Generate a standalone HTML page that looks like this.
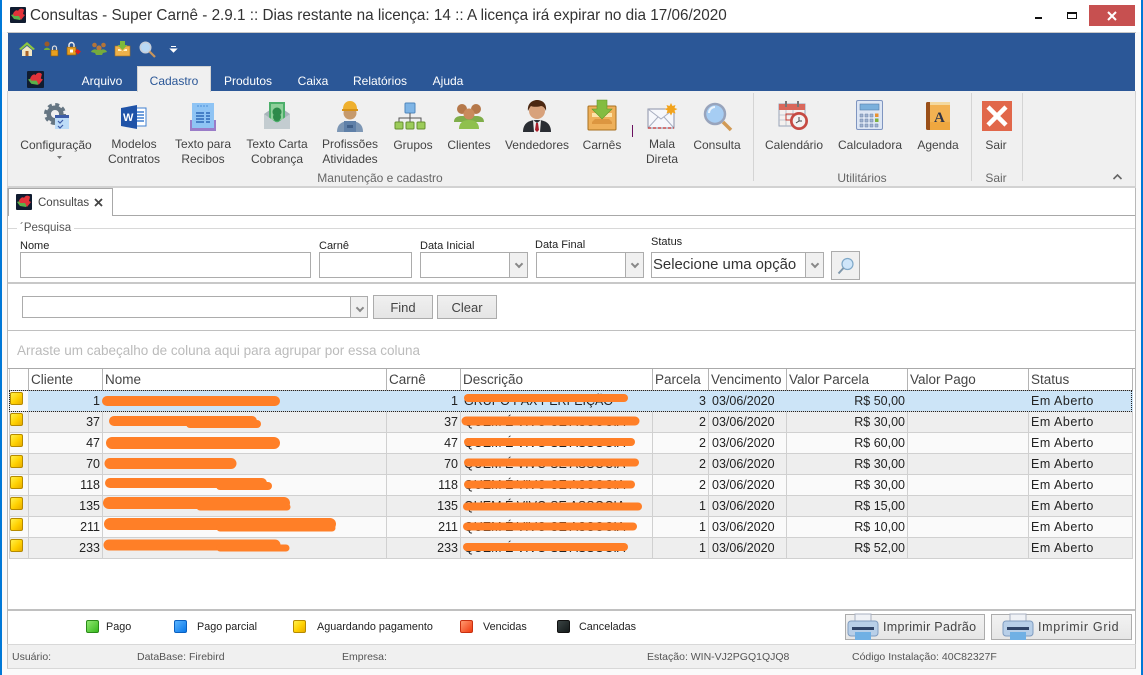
<!DOCTYPE html>
<html lang="pt"><head><meta charset="utf-8"><title>Consultas - Super Carnê</title>
<style>
html,body{margin:0;padding:0;width:1143px;height:675px;overflow:hidden;background:#fafafa}
body{position:relative;font-family:"Liberation Sans",sans-serif;font-size:12px;color:#444}
.a{position:absolute;box-sizing:border-box}
.t{position:absolute;white-space:nowrap;line-height:16px}
.c{transform:translateX(-50%)}
svg{position:absolute;overflow:visible}
.inp{position:absolute;box-sizing:border-box;background:#fff;border:1px solid #acacac}
.dd{position:absolute;box-sizing:border-box;top:0;right:0;bottom:0;width:18px;background:#f0f0f0;border-left:1px solid #acacac}
.dd:after{content:"";position:absolute;left:6px;top:8px;width:4px;height:4px;border-right:2px solid #888;border-bottom:2px solid #888;transform:rotate(45deg)}
.btn{position:absolute;box-sizing:border-box;border:1px solid #acacac;background:linear-gradient(#f0f0f0,#e5e5e5);text-align:center;color:#444}
table{position:absolute;left:9px;top:369px;border-collapse:separate;border-spacing:0;table-layout:fixed;width:1124px;font-size:12.5px;color:#222}
td,th{box-sizing:border-box;border-right:1px solid #d0d0d0;border-bottom:1px solid #d0d0d0;padding:0 2px 0 3px;height:21px;font-weight:normal;text-align:left;white-space:nowrap;overflow:hidden;line-height:20px}
th{height:22px;background:#fff;color:#444;font-size:13.5px;padding-left:2px;border-right-color:#b4b4b4;border-bottom-color:#b4b4b4;border-top:0}
td:first-child,th:first-child{border-left:1px solid #d0d0d0}
td:last-child{letter-spacing:.5px;padding-left:2px}
.r{text-align:right;padding-right:2px}
tr.o td{background:#fafafa}tr.e td{background:#eee}
tr.s td{background:#cce4f7;border-right-color:#cce4f7}
td.i{background:#fafafa!important}
.sq{position:absolute;box-sizing:border-box;width:13px;height:13px;border-radius:2px}
.y{background:linear-gradient(135deg,#fff04a,#ffd000 55%,#e8ac00);border:1px solid #b58a00}
.lg{font-size:10.800px;color:#222}
</style></head><body>
<svg width="0" height="0" style="position:absolute"><defs>
<symbol id="logo" viewBox="0 0 16 16"><rect width="16" height="16" rx="1" fill="#101c30"/><path d="M1 8l6-2 6 3-3 4-6-1z" fill="#5cb04a"/><path d="M3 7c1-3 4-5 5-3 1-3 5-3 6-1l-1 4 2 1-4 5-2-4-5 0z" fill="#e2333a"/></symbol>
</defs></svg>

<!-- window frame -->
<div class="a" style="left:0;top:0;width:2px;height:675px;background:#0078d7"></div>
<div class="a" style="left:1141px;top:0;width:2px;height:675px;background:#0078d7"></div>
<div class="a" style="left:2px;top:0;width:1139px;height:32px;background:#fff"></div>
<svg style="left:10px;top:7px" width="16" height="16"><use href="#logo"/></svg>
<div class="t" style="left:30px;top:7px;font-size:15.280px;line-height:18px;color:#333">Consultas - Super Carnê - 2.9.1 :: Dias restante na licença: 14 :: A licença irá expirar no dia 17/06/2020</div>
<div class="a" style="left:1035px;top:17px;width:7px;height:2px;background:#111"></div>
<div class="a" style="left:1067px;top:12px;width:10px;height:7px;border:1px solid #111;border-top-width:2px"></div>
<div class="a" style="left:1089px;top:5px;width:46px;height:21px;background:#c75050"></div>
<svg style="left:1107px;top:11px" width="10" height="10"><path d="M1 1L9 9M9 1L1 9" stroke="#fff" stroke-width="2"/></svg>

<!-- ribbon -->
<div class="a" style="left:7px;top:32px;width:1129px;height:1px;background:#c8c8c8"></div>
<div class="a" style="left:8px;top:33px;width:1127px;height:58px;background:#2b5797"></div>
<div class="a" style="left:7px;top:91px;width:1129px;height:97px;background:#f0f0f0;border:1px solid #d2d2d2;border-top:0;border-bottom:2px solid #d2d2d2"></div>

<!-- quick access -->
<svg style="left:19px;top:41px" width="16" height="16" viewBox="0 0 16 16"><path d="M8 1L0 8l2 1 6-5 6 5 2-1z" fill="#8cc63f"/><path d="M3 9l5-4 5 4v6H3z" fill="#f3e7c4"/><rect x="6.500" y="10" width="3" height="5" fill="#a8632a"/></svg>
<svg style="left:43px;top:41px" width="16" height="16" viewBox="0 0 16 16"><circle cx="4" cy="3" r="2.500" fill="#9b5a28"/><path d="M1 9c0-3 6-3 6 0z" fill="#6fae3a"/><rect x="8" y="9" width="7" height="6" fill="#e8a020" stroke="#8a5a10" stroke-width=".6"/><path d="M9.500 9V7a2 2 0 014 0v2" fill="none" stroke="#ddd" stroke-width="1.200"/></svg>
<svg style="left:66px;top:41px" width="18" height="16" viewBox="0 0 18 16"><rect x="1" y="6" width="9" height="8" fill="#e8a020" stroke="#8a5a10" stroke-width=".7"/><path d="M3 6V4a2.500 2.500 0 015 0v2" fill="none" stroke="#eee" stroke-width="1.400"/><rect x="4" y="8.500" width="3" height="3" fill="#fff"/><path d="M11 8l4 2.500-3 3-3-3z" fill="#d91f1f"/></svg>
<svg style="left:91px;top:41px" width="16" height="16" viewBox="0 0 16 16"><circle cx="3.500" cy="4" r="2.300" fill="#b1743a"/><circle cx="12.500" cy="4" r="2.300" fill="#b1743a"/><circle cx="8" cy="7" r="2.600" fill="#b9793a"/><path d="M0 11c1-3 5-3 6-2l4 0c1-1 5-1 6 2l-4 1-1 2H5l-1-2z" fill="#75ab3d"/></svg>
<svg style="left:115px;top:41px" width="15" height="16" viewBox="0 0 15 16"><rect x="0" y="5" width="15" height="10" fill="#eeb14a" stroke="#a8701f" stroke-width=".6"/><path d="M3 8h2l2.500 2.500L10 8h2v2H3z" fill="#fff3c8"/><path d="M5 0h5v4h2.500l-5 5-5-5H5z" fill="#7db93c"/></svg>
<svg style="left:139px;top:41px" width="17" height="17" viewBox="0 0 17 17"><circle cx="6.500" cy="6.500" r="5.200" fill="#b9d9f5" stroke="#c6cfda" stroke-width="1.600"/><path d="M10.500 10.500L16 16" stroke="#c8955c" stroke-width="2.200"/></svg>
<svg style="left:170px;top:46px" width="7" height="7"><path d="M1 0.500h5M0.500 3h6L3.500 6z" stroke="#fff" fill="#fff" stroke-width="1"/></svg>

<!-- menu tabs -->
<svg style="left:27px;top:71px" width="17" height="17"><use href="#logo"/></svg>
<div class="a" style="left:137px;top:66px;width:74px;height:26px;background:#f0f0f0;border:1px solid #d2d2d2;border-bottom:0"></div>
<div class="t c" style="left:102px;top:73px;color:#fff">Arquivo</div>
<div class="t c" style="left:174px;top:73px;color:#2b5797">Cadastro</div>
<div class="t c" style="left:248px;top:73px;color:#fff">Produtos</div>
<div class="t c" style="left:313px;top:73px;color:#fff">Caixa</div>
<div class="t c" style="left:380px;top:73px;color:#fff">Relatórios</div>
<div class="t c" style="left:448px;top:73px;color:#fff">Ajuda</div>

<!-- ribbon icons -->
<svg style="left:42px;top:102px" width="28" height="28" viewBox="0 0 28 28"><circle cx="13" cy="12" r="9.500" fill="none" stroke="#657582" stroke-width="3" stroke-dasharray="4 3.450"/><circle cx="13" cy="12" r="6.300" fill="none" stroke="#657582" stroke-width="4.500"/><rect x="13" y="13" width="14" height="14" fill="#bddcf8"/><rect x="13" y="13" width="14" height="3" fill="#3e5da8"/><path d="M16 19l2 2 3-3M16 24l2 2 3-3" fill="none" stroke="#3e5da8" stroke-width="1.200"/></svg>
<svg style="left:121px;top:105px" width="26" height="24" viewBox="0 0 26 24"><rect x="11" y="3" width="14" height="18" fill="#fff" stroke="#3f7fd0"/><path d="M14 7h9M14 10h9M14 13h9M14 16h9" stroke="#3f7fd0" stroke-width="1.500"/><path d="M0 3L16 0v24L0 21z" fill="#1f53a8"/><text x="2" y="16" font-family="Liberation Sans" font-weight="bold" font-size="11" fill="#fff">W</text></svg>
<svg style="left:189px;top:102px" width="28" height="28" viewBox="0 0 28 28"><path d="M1 18h26v11H1z" fill="#9a7cc8"/><path d="M3 1h22v25H3z" fill="#8fc4f4"/><path d="M8 4h12" stroke="#4e8fd8" stroke-width="1" stroke-dasharray="2 1"/><path d="M7 11h8M7 14h8M7 17h8M7 20h8M17 11h4M17 14h4M17 17h4M17 20h4" stroke="#2f69b8" stroke-width="1.500"/></svg>
<svg style="left:264px;top:102px" width="26" height="28" viewBox="0 0 26 28"><path d="M0 12L13 3l13 9v15H0z" fill="#a8b4ba"/><rect x="5" y="0" width="16" height="20" fill="#4caf6a"/><rect x="7" y="2" width="12" height="16" fill="#8fd09a"/><circle cx="13" cy="10" r="4.500" fill="#2d8a4a"/><path d="M0 27V12l13 9 13-9v15z" fill="#c3ccd0"/><circle cx="13" cy="15" r="4" fill="#2d8a4a"/></svg>
<svg style="left:336px;top:100px" width="28" height="32" viewBox="0 0 28 32"><path d="M1 32c0-8 5-11 13-11s13 3 13 11z" fill="#7d97b5"/><path d="M8 21h12v11H8z" fill="#5f80a8"/><circle cx="14" cy="13" r="6.500" fill="#c69a6c"/><path d="M7 9c0-5 3-8 7-8s7 3 7 8z" fill="#efb02e"/><rect x="6" y="9" width="16" height="2" fill="#d79218"/><rect x="11" y="25" width="6" height="3" fill="#405f88"/></svg>
<svg style="left:395px;top:102px" width="30" height="27" viewBox="0 0 30 27"><rect x="10" y="1" width="10" height="10" rx="1" fill="#7fb5e6" stroke="#4f86bc"/><path d="M15 11v5M4 20v-4h22v4M15 16v4" fill="none" stroke="#555"/><rect x="0" y="20" width="8" height="7" rx="1" fill="#9ccc5a" stroke="#668f2e"/><rect x="11" y="20" width="8" height="7" rx="1" fill="#9ccc5a" stroke="#668f2e"/><rect x="22" y="20" width="8" height="7" rx="1" fill="#9ccc5a" stroke="#668f2e"/></svg>
<svg style="left:454px;top:102px" width="30" height="27" viewBox="0 0 30 27"><circle cx="8" cy="7" r="5" fill="#b5784a"/><circle cx="22" cy="7" r="5" fill="#b5784a"/><path d="M0 20c0-6 6-6 8-6s8 0 8 6zM14 20c0-6 6-6 8-6s8 0 8 6z" fill="#7fae4a"/><circle cx="15" cy="12" r="5.500" fill="#c98a5c"/><path d="M5 27c0-7 5-9 10-9s10 2 10 9z" fill="#8fc04e"/></svg>
<svg style="left:523px;top:100px" width="28" height="32" viewBox="0 0 28 32"><path d="M0 32c0-9 6-12 14-12s14 3 14 12z" fill="#2a2d33"/><path d="M10 20l4 3 4-3-1 12h-6z" fill="#f0f0f0"/><path d="M13 23h2l1 7-2 2-2-2z" fill="#a81e2a"/><circle cx="14" cy="11" r="8" fill="#d8a27c"/><path d="M5 11C4 3 10 0 14 0c5 0 10 3 9 11-1-3-3-5-5-5-3 1-8 1-10 0-1 1-2 3-3 5z" fill="#4c2812"/></svg>
<svg style="left:587px;top:100px" width="30" height="30" viewBox="0 0 30 30"><rect x="1" y="6" width="28" height="24" rx="1" fill="#eeb05a" stroke="#a8701f"/><path d="M5 13h6l4 4 4-4h6v4H5z" fill="#fde3a8"/><path d="M5 22l3-3h14l3 3v2H5z" fill="#dc9640"/><path d="M10 0h10v9h5L15 19 5 9h5z" fill="#83bc41" stroke="#5f962a" stroke-width=".6"/></svg>
<svg style="left:647px;top:103px" width="32" height="26" viewBox="0 0 32 26"><rect x="1" y="6" width="26" height="19" fill="#f6f7fb" stroke="#8b92a8"/><path d="M1 6l13 10L27 6M1 25l10-11M27 25L17 14" fill="none" stroke="#a8aec0"/><path d="M1 25h26" stroke="#c84a4a" stroke-width="1.500" stroke-dasharray="3 2"/><path d="M24 0l1.500 3 3-1-1 3 3 1-3 1.500 1 3-3-1-1.500 3-1.500-3-3 1 1-3-3-1.500 3-1-1-3 3 1z" fill="#f2a31c"/></svg>
<svg style="left:703px;top:102px" width="29" height="29" viewBox="0 0 29 29"><circle cx="12" cy="12" r="10" fill="#a6cdf3" stroke="#98a4bc" stroke-width="2.500"/><path d="M6 11a6 6 0 016-6" fill="none" stroke="#eaf4fd" stroke-width="2"/><path d="M20 20l8 8" stroke="#d19a55" stroke-width="3.500"/></svg>
<div class="a" style="left:632px;top:125px;width:1px;height:12px;background:#6b1060"></div>
<svg style="left:779px;top:101px" width="30" height="30" viewBox="0 0 30 30"><rect x="0" y="3" width="26" height="22" fill="#f4f1ef" stroke="#98a4b8"/><rect x="0" y="3" width="26" height="6" fill="#d9685c"/><path d="M0 14h26M0 19h26M7 9v16M14 9v16" stroke="#b4bcc8" stroke-width=".8"/><rect x="6" y="0" width="2" height="6" fill="#777"/><rect x="18" y="0" width="2" height="6" fill="#777"/><path d="M7 13h8v6H7z" fill="none" stroke="#c83a30"/><circle cx="20" cy="20" r="9" fill="#c64a42"/><circle cx="20" cy="20" r="6.300" fill="#f2f2f2"/><path d="M20 16v4l-3 2M20 20h3" stroke="#444" fill="none"/></svg>
<svg style="left:856px;top:100px" width="27" height="30" viewBox="0 0 27 30"><rect x=".5" y=".5" width="26" height="29" rx="1.500" fill="#dde6f4" stroke="#7f95c0"/><rect x="4" y="4" width="19" height="6" fill="#7bb0dc" stroke="#567faa" stroke-width=".6"/><path d="M4 14h3v3H4zM9 14h3v3H9zM14 14h3v3h-3zM4 19h3v3H4zM9 19h3v3H9zM14 19h3v3h-3zM4 24h3v3H4zM9 24h3v3H9zM14 24h3v3h-3zM19 24h3v3h-3z" fill="#9fb2cf" stroke="#6f84a8" stroke-width=".5"/><rect x="19" y="13.500" width="3.500" height="3.500" fill="#e89030"/><rect x="19" y="18.500" width="3.500" height="3.500" fill="#7fb040"/></svg>
<svg style="left:926px;top:102px" width="24" height="28" viewBox="0 0 24 28"><rect x="0" y="0" width="24" height="28" rx="1.500" fill="#9a4f18"/><rect x="4" y="0" width="20" height="3" fill="#f3d9a0"/><rect x="4" y="3" width="20" height="25" fill="#f2b252"/><rect x="4" y="20" width="20" height="8" fill="#eea238" opacity=".7"/><text x="8" y="20" font-family="Liberation Serif" font-weight="bold" font-size="15" fill="#2f3446">A</text></svg>
<svg style="left:982px;top:101px" width="30" height="30" viewBox="0 0 30 30"><rect width="30" height="30" fill="#e1674a"/><path d="M6 6l18 18M24 6L6 24" stroke="#fff" stroke-width="4.500"/></svg>

<!-- ribbon labels -->
<div class="t c" style="left:56px;top:137px">Configuração</div>
<svg style="left:57px;top:156px" width="5" height="3"><path d="M0 0h5L2.500 3z" fill="#777"/></svg>
<div class="t c" style="left:134px;top:137px;text-align:center;line-height:15px">Modelos<br>Contratos</div>
<div class="t c" style="left:203px;top:137px;text-align:center;line-height:15px">Texto para<br>Recibos</div>
<div class="t c" style="left:277px;top:137px;text-align:center;line-height:15px">Texto Carta<br>Cobrança</div>
<div class="t c" style="left:350px;top:137px;text-align:center;line-height:15px">Profissões<br>Atividades</div>
<div class="t c" style="left:413px;top:137px">Grupos</div>
<div class="t c" style="left:469px;top:137px">Clientes</div>
<div class="t c" style="left:537px;top:137px">Vendedores</div>
<div class="t c" style="left:602px;top:137px">Carnês</div>
<div class="t c" style="left:662px;top:137px;text-align:center;line-height:15px">Mala<br>Direta</div>
<div class="t c" style="left:717px;top:137px">Consulta</div>
<div class="t c" style="left:794px;top:137px">Calendário</div>
<div class="t c" style="left:870px;top:137px">Calculadora</div>
<div class="t c" style="left:938px;top:137px">Agenda</div>
<div class="t c" style="left:996px;top:137px">Sair</div>
<div class="t c" style="left:380px;top:170px;color:#666">Manutenção e cadastro</div>
<div class="t c" style="left:862px;top:170px;color:#666">Utilitários</div>
<div class="t c" style="left:996px;top:170px;color:#666">Sair</div>
<div class="a" style="left:753px;top:93px;width:1px;height:88px;background:#d4d4d4"></div>
<div class="a" style="left:971px;top:93px;width:1px;height:88px;background:#d4d4d4"></div>
<div class="a" style="left:1022px;top:93px;width:1px;height:88px;background:#d4d4d4"></div>
<svg style="left:1113px;top:174px" width="9" height="6"><path d="M.500 5L4.500 1l4 4" fill="none" stroke="#666" stroke-width="1.600"/></svg>

<!-- main content -->
<div class="a" style="left:8px;top:188px;width:1127px;height:480px;background:#fff"></div>
<div class="a" style="left:7px;top:188px;width:1px;height:480px;background:#b8b8b8"></div>
<div class="a" style="left:1135px;top:188px;width:1px;height:480px;background:#b8b8b8"></div>
<div class="a" style="left:8px;top:215px;width:1127px;height:1px;background:#a8a8a8"></div>
<div class="a" style="left:8px;top:188px;width:105px;height:28px;background:#fff;border:1px solid #a8a8a8;border-bottom:0"></div>
<svg style="left:16px;top:194px" width="16" height="16"><use href="#logo"/></svg>
<div class="t" style="left:38px;top:195px;font-size:11.500px">Consultas</div>
<svg style="left:94px;top:198px" width="9" height="9"><path d="M1 1l7 7M8 1L1 8" stroke="#444" stroke-width="1.800"/></svg>

<!-- pesquisa -->
<div class="a" style="left:8px;top:228px;width:1127px;height:1px;background:#d8d8d8"></div>
<div class="t" style="left:17px;top:220px;background:#fff;padding:0 3px;font-size:11.500px;color:#555">´Pesquisa</div>
<div class="t" style="left:20px;top:238px;font-size:11px;color:#222">Nome</div>
<div class="t" style="left:319px;top:238px;font-size:11px;color:#222">Carnê</div>
<div class="t" style="left:420px;top:238px;font-size:11px;color:#222">Data Inicial</div>
<div class="t" style="left:535px;top:237px;font-size:11px;color:#222">Data Final</div>
<div class="t" style="left:651px;top:234px;font-size:11px;color:#222">Status</div>
<div class="inp" style="left:20px;top:252px;width:291px;height:26px"></div>
<div class="inp" style="left:319px;top:252px;width:93px;height:26px"></div>
<div class="inp" style="left:420px;top:252px;width:108px;height:26px"><div class="dd"></div></div>
<div class="inp" style="left:536px;top:252px;width:108px;height:26px"><div class="dd"></div></div>
<div class="inp" style="left:651px;top:252px;width:173px;height:26px"><div class="dd"></div><div class="t" style="left:1px;top:4px;font-size:14.900px;color:#333">Selecione uma opção</div></div>
<div class="btn" style="left:831px;top:251px;width:29px;height:29px;background:#f0f0f0"></div>
<svg style="left:837px;top:257px" width="18" height="18" viewBox="0 0 18 18"><circle cx="10.500" cy="7" r="5.500" fill="#cfe6fa" stroke="#7fa8c8" stroke-width="1.200"/><path d="M6.500 11L1.500 16.500" stroke="#7f98ac" stroke-width="2"/></svg>
<div class="a" style="left:8px;top:282px;width:1127px;height:2px;background:#c8c8c8"></div>

<!-- find -->
<div class="inp" style="left:22px;top:296px;width:346px;height:22px"><div class="dd" style="width:17px"></div></div>
<div class="btn" style="left:373px;top:295px;width:60px;height:24px;line-height:23px;font-size:13px">Find</div>
<div class="btn" style="left:437px;top:295px;width:60px;height:24px;line-height:23px;font-size:13px">Clear</div>
<div class="a" style="left:8px;top:330px;width:1127px;height:1px;background:#c0c0c0"></div>
<div class="t" style="left:17px;top:343px;font-size:13.500px;color:#bbb">Arraste um cabeçalho de coluna aqui para agrupar por essa coluna</div>
<div class="a" style="left:8px;top:368px;width:1127px;height:1px;background:#aaa"></div>

<!-- grid -->
<table><colgroup><col style="width:20px"><col style="width:74px"><col style="width:284px"><col style="width:74px"><col style="width:192px"><col style="width:56px"><col style="width:78px"><col style="width:121px"><col style="width:121px"><col style="width:104px"></colgroup>
<tr><th></th><th>Cliente</th><th>Nome</th><th>Carnê</th><th>Descrição</th><th>Parcela</th><th>Vencimento</th><th>Valor Parcela</th><th>Valor Pago</th><th>Status</th></tr>
<tr class="s"><td class="i"></td><td class="r">1</td><td></td><td class="r">1</td><td>GRUPO PAX PERFEIÇÃO</td><td class="r">3</td><td>03/06/2020</td><td class="r">R$ 50,00</td><td></td><td>Em Aberto</td></tr>
<tr class="e"><td class="i" style="background:#eee!important"></td><td class="r">37</td><td></td><td class="r">37</td><td>QUEM É VIVO SE ASSOCIA</td><td class="r">2</td><td>03/06/2020</td><td class="r">R$ 30,00</td><td></td><td>Em Aberto</td></tr>
<tr class="o"><td class="i"></td><td class="r">47</td><td></td><td class="r">47</td><td>QUEM É VIVO SE ASSOCIA</td><td class="r">2</td><td>03/06/2020</td><td class="r">R$ 60,00</td><td></td><td>Em Aberto</td></tr>
<tr class="e"><td class="i" style="background:#eee!important"></td><td class="r">70</td><td></td><td class="r">70</td><td>QUEM É VIVO SE ASSOCIA</td><td class="r">2</td><td>03/06/2020</td><td class="r">R$ 30,00</td><td></td><td>Em Aberto</td></tr>
<tr class="o"><td class="i"></td><td class="r">118</td><td></td><td class="r">118</td><td>QUEM É VIVO SE ASSOCIA</td><td class="r">2</td><td>03/06/2020</td><td class="r">R$ 30,00</td><td></td><td>Em Aberto</td></tr>
<tr class="e"><td class="i" style="background:#eee!important"></td><td class="r">135</td><td></td><td class="r">135</td><td>QUEM É VIVO SE ASSOCIA</td><td class="r">1</td><td>03/06/2020</td><td class="r">R$ 15,00</td><td></td><td>Em Aberto</td></tr>
<tr class="o"><td class="i"></td><td class="r">211</td><td></td><td class="r">211</td><td>QUEM É VIVO SE ASSOCIA</td><td class="r">1</td><td>03/06/2020</td><td class="r">R$ 10,00</td><td></td><td>Em Aberto</td></tr>
<tr class="e"><td class="i" style="background:#eee!important"></td><td class="r">233</td><td></td><td class="r">233</td><td>QUEM É VIVO SE ASSOCIA</td><td class="r">1</td><td>03/06/2020</td><td class="r">R$ 52,00</td><td></td><td>Em Aberto</td></tr>
</table>
<div class="a" style="left:9px;top:390px;width:1123px;height:22px;border:1px dotted #222"></div>
<div class="sq y" style="left:10px;top:392px"></div>
<div class="sq y" style="left:10px;top:413px"></div>
<div class="sq y" style="left:10px;top:434px"></div>
<div class="sq y" style="left:10px;top:455px"></div>
<div class="sq y" style="left:10px;top:476px"></div>
<div class="sq y" style="left:10px;top:497px"></div>
<div class="sq y" style="left:10px;top:518px"></div>
<div class="sq y" style="left:10px;top:539px"></div>

<!-- redaction scribbles -->
<svg style="left:0;top:0" width="1143" height="675" fill="none" stroke="#ff7f27" stroke-linecap="round">
<path d="M107 401H275" stroke-width="10"/>
<path d="M114 421H252" stroke-width="10"/><path d="M190 424H257" stroke-width="8"/>
<path d="M112 443H274" stroke-width="12"/>
<path d="M110 463.500H231" stroke-width="11"/>
<path d="M110 483H262" stroke-width="10"/><path d="M220 486H268" stroke-width="8"/>
<path d="M109 503H284" stroke-width="12"/><path d="M200 507H287" stroke-width="7"/>
<path d="M110 524H330" stroke-width="12"/><path d="M220 528H332" stroke-width="7"/>
<path d="M109 545H275" stroke-width="11"/><path d="M220 548H286" stroke-width="7"/>
<path d="M468 398H624" stroke-width="8"/>
<path d="M466 421H635" stroke-width="9"/>
<path d="M468 442H631" stroke-width="8"/>
<path d="M468 462.500H635" stroke-width="8"/>
<path d="M468 484.500H631" stroke-width="8"/>
<path d="M467 506.500H638" stroke-width="8"/>
<path d="M467 526.500H633" stroke-width="8"/>
<path d="M467 547H624" stroke-width="8"/>
</svg>

<!-- legend -->
<div class="a" style="left:8px;top:609px;width:1127px;height:2px;background:#c0c0c0"></div>
<div class="sq" style="left:86px;top:620px;background:linear-gradient(135deg,#8fe870,#38b81e);border:1px solid #2a8a18"></div>
<div class="t lg" style="left:106px;top:619px">Pago</div>
<div class="sq" style="left:174px;top:620px;background:linear-gradient(135deg,#5ab4ff,#0a78e8);border:1px solid #0a60c0"></div>
<div class="t lg" style="left:197px;top:619px">Pago parcial</div>
<div class="sq y" style="left:293px;top:620px"></div>
<div class="t lg" style="left:317px;top:619px">Aguardando pagamento</div>
<div class="sq" style="left:460px;top:620px;background:linear-gradient(135deg,#ff9a70,#f03a10);border:1px solid #c83010"></div>
<div class="t lg" style="left:483px;top:619px">Vencidas</div>
<div class="sq" style="left:557px;top:620px;background:linear-gradient(135deg,#3a4444,#141a1a);border:1px solid #111"></div>
<div class="t lg" style="left:579px;top:619px">Canceladas</div>

<div class="btn" style="left:845px;top:614px;width:140px;height:26px;background:linear-gradient(#f2f2f2,#e6e6e6)"></div>
<div class="btn" style="left:991px;top:614px;width:141px;height:26px;background:linear-gradient(#f2f2f2,#e6e6e6)"></div>
<svg style="left:847px;top:614px" width="32" height="26" viewBox="0 0 32 26"><rect x="8" y="0" width="16" height="8" fill="#f0f2f6" stroke="#a8b0c0"/><rect x="1" y="7" width="30" height="15" rx="3" fill="#b8cfe8" stroke="#7f9cc0"/><rect x="5" y="13" width="22" height="3" fill="#2f4468"/><rect x="8" y="18" width="16" height="8" fill="#70b0e4"/></svg>
<svg style="left:1002px;top:614px" width="32" height="26" viewBox="0 0 32 26"><rect x="8" y="0" width="16" height="8" fill="#f0f2f6" stroke="#a8b0c0"/><rect x="1" y="7" width="30" height="15" rx="3" fill="#b8cfe8" stroke="#7f9cc0"/><rect x="5" y="13" width="22" height="3" fill="#2f4468"/><rect x="8" y="18" width="16" height="8" fill="#70b0e4"/></svg>
<div class="t" style="left:883px;top:619px;font-size:12.500px;color:#444;letter-spacing:.3px">Imprimir Padrão</div>
<div class="t" style="left:1038px;top:619px;font-size:12.500px;color:#444;letter-spacing:.7px">Imprimir Grid</div>

<!-- status bar -->
<div class="a" style="left:7px;top:644px;width:1129px;height:25px;background:#f0f0f0;border:1px solid #d8d8d8;border-left-color:#c8c8c8;border-right-color:#c8c8c8"></div>
<div class="t" style="left:12px;top:649px;font-size:10.500px;color:#555">Usuário:</div>
<div class="t" style="left:137px;top:649px;font-size:10.500px;color:#555">DataBase: Firebird</div>
<div class="t" style="left:342px;top:649px;font-size:10.500px;color:#555">Empresa:</div>
<div class="t" style="left:647px;top:649px;font-size:10.500px;color:#555">Estação: WIN-VJ2PGQ1QJQ8</div>
<div class="t" style="left:852px;top:649px;font-size:10.500px;color:#555">Código Instalação: 40C82327F</div>
</body></html>
